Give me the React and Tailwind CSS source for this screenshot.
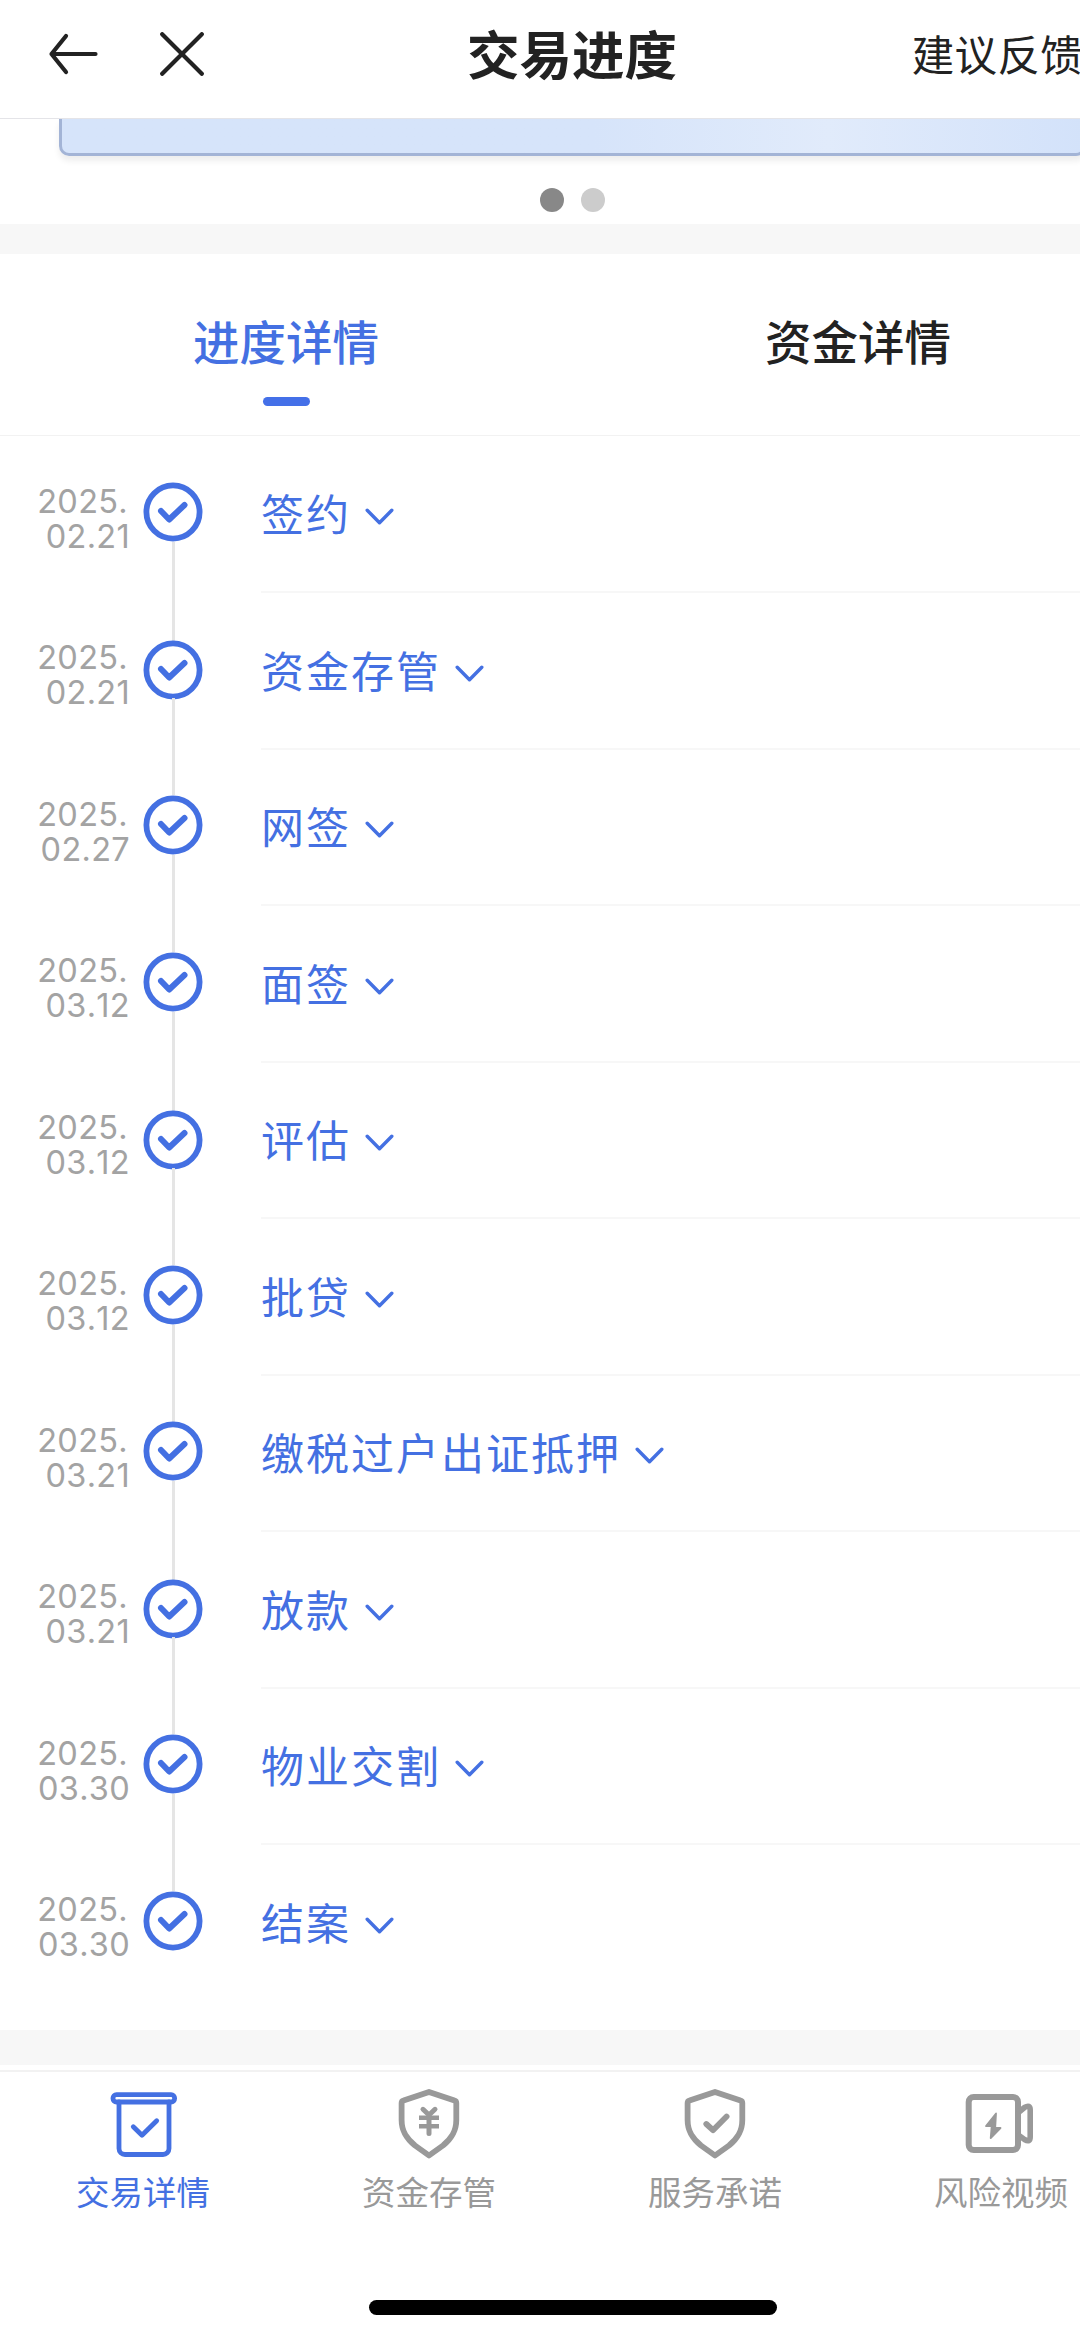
import React from "react";

const steps = [
  ["02.21", "签约"],
  ["02.21", "资金存管"],
  ["02.27", "网签"],
  ["03.12", "面签"],
  ["03.12", "评估"],
  ["03.12", "批贷"],
  ["03.21", "缴税过户出证抵押"],
  ["03.21", "放款"],
  ["03.30", "物业交割"],
  ["03.30", "结案"],
];

const stroke = { fill: "none", stroke: "currentColor", strokeLinecap: "round", strokeLinejoin: "round" };

function BackIcon() {
  return (
    <svg width="52" height="44" viewBox="0 0 52 44" {...stroke} strokeWidth="4.2">
      <path d="M19 4 4.5 22 19 40M4.5 22H48.5" />
    </svg>
  );
}

function CloseIcon() {
  return (
    <svg width="44" height="44" viewBox="0 0 44 44" {...stroke} strokeWidth="4.2">
      <path d="M2.2 2.2 41.8 41.8M41.8 2.2 2.2 41.8" />
    </svg>
  );
}

function StepIcon() {
  return (
    <svg className="shrink-0" width="60" height="60" viewBox="0 0 60 60" {...stroke}>
      <circle cx="30" cy="30" r="26.6" strokeWidth="5.8" />
      <path d="M18 29 26.2 37.5 41.5 23" strokeWidth="6" />
    </svg>
  );
}

function Chevron() {
  return (
    <svg width="29" height="18" viewBox="0 0 29 18" {...stroke} strokeWidth="3.4">
      <path d="M2.2 2.2 14.5 14.8 26.8 2.2" />
    </svg>
  );
}

function DealIcon() {
  return (
    <svg width="72" height="74" viewBox="0 0 72 74" {...stroke} strokeWidth="4.8">
      <rect x="6" y="8.6" width="61.6" height="7.4" rx="3.5" />
      <path d="M12 16V62.5a6 6 0 0 0 6 6H56a6 6 0 0 0 6-6V16" />
      <path d="M26.3 40.7 35 49.2 49.7 34.7" />
    </svg>
  );
}

function ShieldIcon({ children }) {
  return (
    <svg width="72" height="74" viewBox="0 0 72 74" {...stroke} strokeWidth="5.8">
      <path d="M36 6 61.5 14.5Q63.3 15 63.3 17V34C63.3 46 58 53 50 59.5L36 69.5 22 59.5C14 53 8.6 46 8.6 34V17Q8.6 15 10.5 14.5Z" />
      {children}
    </svg>
  );
}

function VideoIcon() {
  return (
    <svg width="72" height="74" viewBox="0 0 72 74" {...stroke} strokeWidth="6">
      <rect x="3.7" y="11" width="49.3" height="53" rx="5" />
      <path d="M54 26 59.5 21.5Q65.2 18 65.2 24V51Q65.2 57 59.5 53.5L54 49.5" strokeWidth="5.6" />
      <path d="M31 27.5 21 40H26.7L25.7 52 35.5 42H30.2Z" fill="currentColor" strokeWidth="1.8" />
    </svg>
  );
}

const nav = [
  ["交易详情", <DealIcon />],
  [
    "资金存管",
    <ShieldIcon>
      <path d="M30 23.3 36 29 42 23.3M36 29V47.5" strokeWidth="5" />
      <path d="M26 31.7H46M26 40.3H46" strokeWidth="4.6" strokeLinecap="butt" />
    </ShieldIcon>,
  ],
  ["服务承诺", <ShieldIcon><path d="M27.3 38 34 44.2 47.6 30.5" /></ShieldIcon>],
  ["风险视频", <VideoIcon />],
];

function Step({ date, title, index, last }) {
  return (
    <li className="flex h-[156.5px]">
      <time className="w-[130px] shrink-0 pt-[47px] text-right font-['Inter'] text-[32.5px] leading-[35.3px] tracking-[0.3px] text-[#a3a3a3] [font-kerning:none]">
        <span className="pr-[2px]">2025.</span>
        <br />
        {date}
      </time>
      <div className={`ml-[13px] flex w-[60px] shrink-0 flex-col items-center text-[#4470e2] ${index % 3 === 1 ? "pt-[47px]" : "pt-[45.5px]"}`}>
        <StepIcon />
        {!last && <span className={`w-[3px] shrink-0 bg-[#e5e5e5] ${index % 3 === 0 ? "h-[99px]" : index % 3 === 1 ? "-mt-[2px] h-[97px]" : "h-[97px]"}`} />}
      </div>
      <div className={`ml-[58px] flex flex-1 items-start pt-[43.5px] text-[#4470e2] ${last ? "" : "border-b-2 border-[#f7f7f7]"}`}>
        <span className="text-[43px] leading-[64px] tracking-[2px]">{title}</span>
        <span className="ml-[14px] pt-[28px]">
          <Chevron />
        </span>
      </div>
    </li>
  );
}

export default function App() {
  return (
    <div className="h-[2338px] w-[1080px] overflow-hidden bg-white font-['Noto_Sans_CJK_SC',sans-serif] text-[#222]">
      <div className="flex h-full w-[1144px] flex-col">
        <header className="grid h-[119px] shrink-0 grid-cols-[1fr_auto_1fr] border-b border-[#e4e4e8] pb-[10px]">
          <div className="flex items-center gap-[61px] pl-[47px]">
            <BackIcon />
            <CloseIcon />
          </div>
          <h1 className="flex items-center pb-[3px] text-[52.5px] font-bold leading-none">交易进度</h1>
          <span className="flex items-center justify-end pr-[61px] pb-[2px] text-[42.5px] leading-none tracking-[0.3px]">建议反馈</span>
        </header>
        <section className="flex h-[105px] shrink-0 flex-col items-center">
          <div className="h-[37px] w-[1027px] rounded-b-[10px] border-[3px] border-t-0 border-[#a3b4d6] bg-linear-to-r from-[#d6e4fa] from-52% via-[#e1ebfb] via-75% to-[#d3e2fa] to-100% shadow-[0_5px_6px_rgba(0,0,0,0.07)]" />
          <div className="mt-[32px] flex gap-[17px]">
            <i className="size-[24px] rounded-full bg-[#888]" />
            <i className="size-[24px] rounded-full bg-[#ccc]" />
          </div>
        </section>
        <div className="h-[30px] shrink-0 bg-[#f7f7f7]" />
        <nav className="grid h-[182px] shrink-0 grid-cols-2 border-b border-[#f2f2f2] text-[46.5px] font-medium">
          <div className="flex flex-col items-center pt-[52px] text-[#4470e2]">
            <span className="leading-[68px]">进度详情</span>
            <i className="mt-[23px] h-[9px] w-[47px] rounded-full bg-[#4470e8]" />
          </div>
          <div className="flex flex-col items-center pt-[52px]">
            <span className="leading-[68px]">资金详情</span>
          </div>
        </nav>
        <ol className="h-[1594px] shrink-0 pt-[0.5px]">
          {steps.map(([date, title], i) => (
            <Step key={title} date={date} title={title} index={i} last={i === steps.length - 1} />
          ))}
        </ol>
        <div className="h-[35px] shrink-0 bg-[#f7f7f7]" />
        <footer className="mt-[5px] flex flex-1 flex-col items-center border-t-2 border-[#f2f2f2]">
          <div className="grid w-full grid-cols-4 pt-[14px] text-[#999]">
            {nav.map(([label, icon], i) => (
              <div key={label} className={`flex flex-col items-center ${i === 0 ? "text-[#4470e2]" : ""}`}>
                {icon}
                <span className="mt-[7px] text-[33.5px] leading-[48px]">{label}</span>
              </div>
            ))}
          </div>
          <div className="mt-[85px] ml-[2px] h-[15px] w-[408px] rounded-full bg-black" />
        </footer>
      </div>
    </div>
  );
}
